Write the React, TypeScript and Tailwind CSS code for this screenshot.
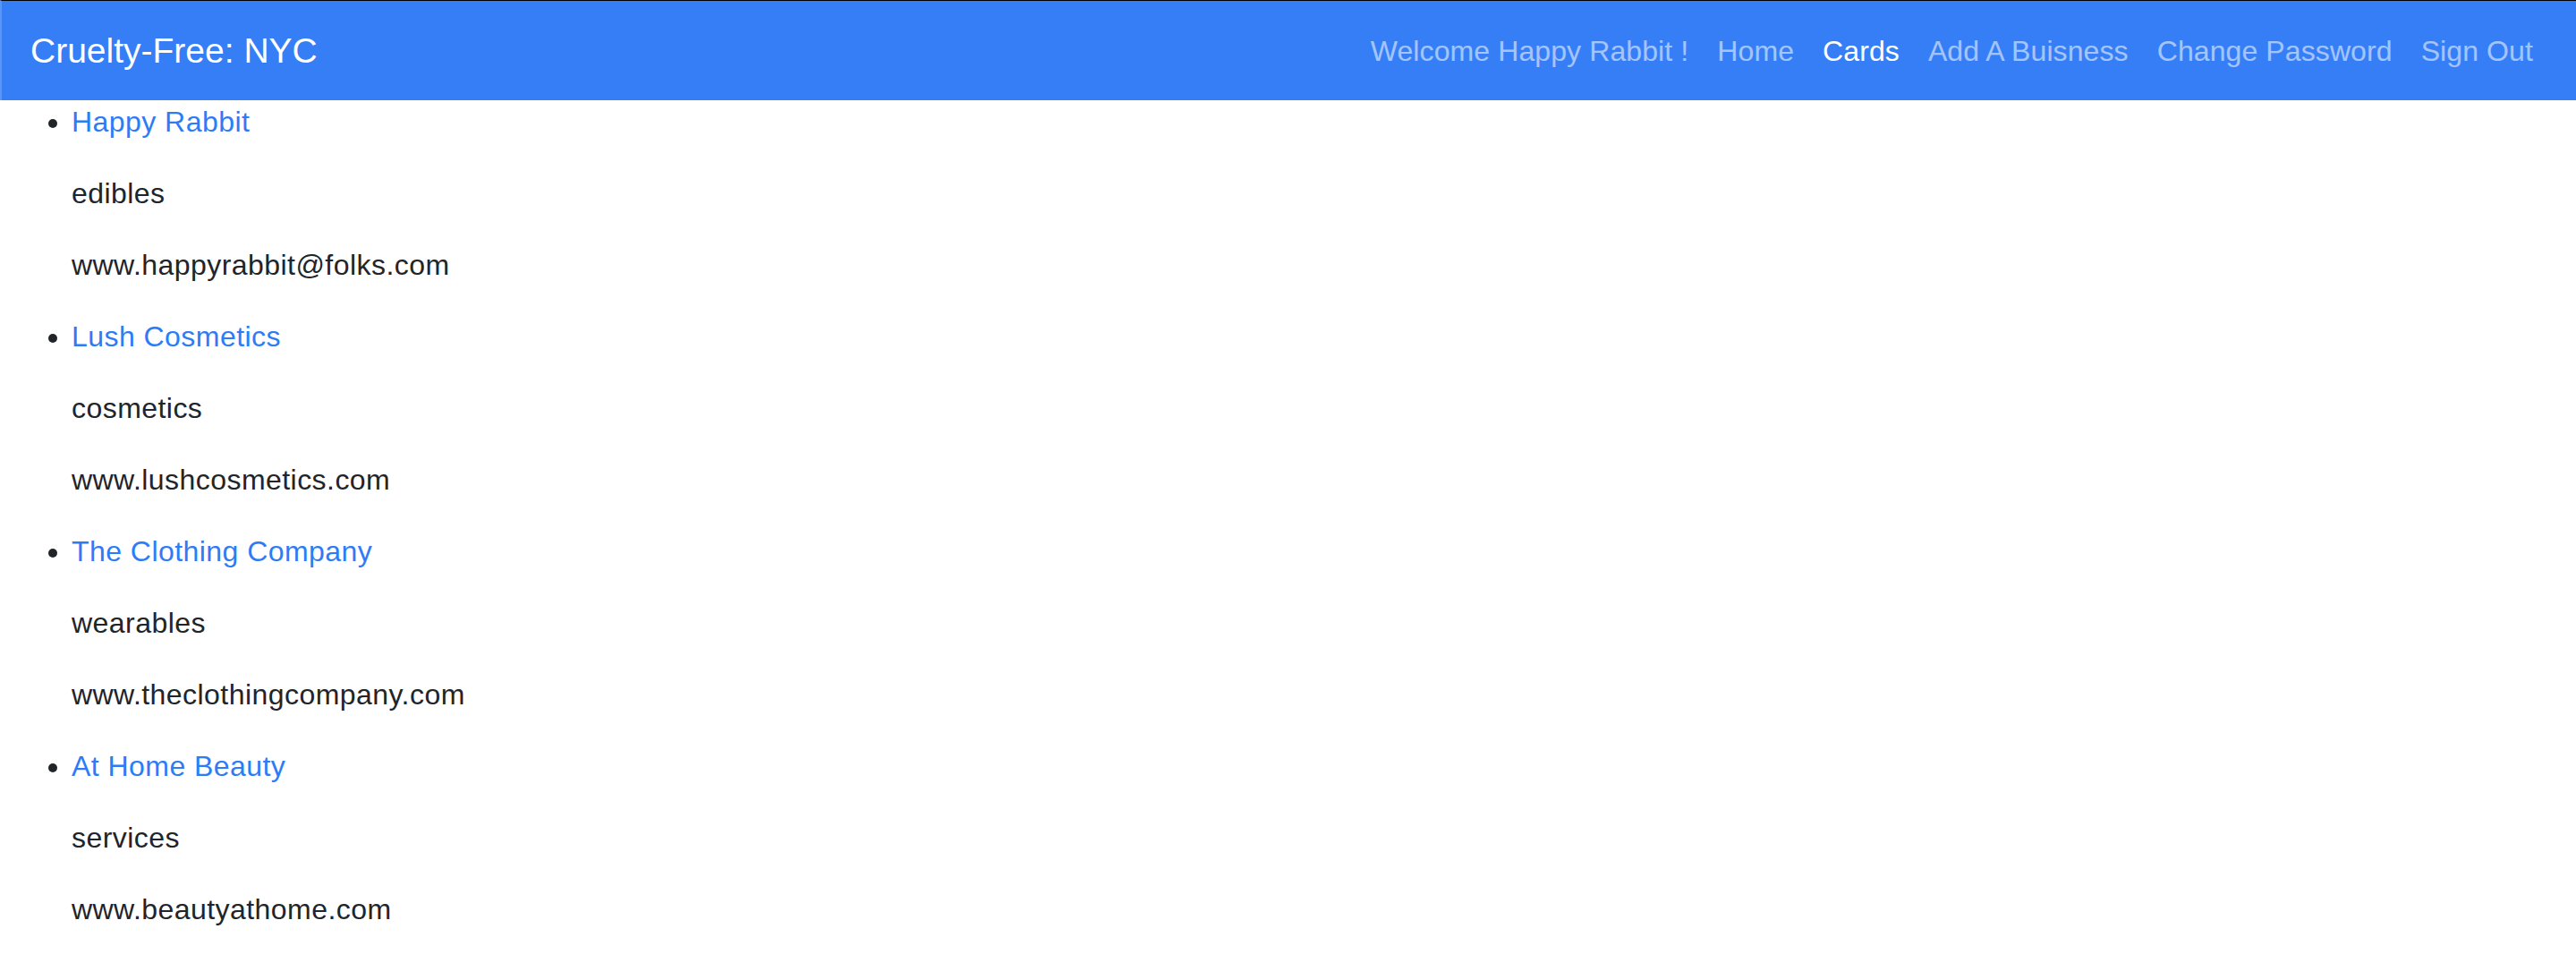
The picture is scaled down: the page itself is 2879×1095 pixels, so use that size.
import React from "react";

const businesses = [
  { name: "Happy Rabbit", category: "edibles", site: "www.happyrabbit@folks.com" },
  { name: "Lush Cosmetics", category: "cosmetics", site: "www.lushcosmetics.com" },
  { name: "The Clothing Company", category: "wearables", site: "www.theclothingcompany.com" },
  { name: "At Home Beauty", category: "services", site: "www.beautyathome.com" },
];

const links = [
  { label: "Welcome Happy Rabbit !", active: false },
  { label: "Home", active: false },
  { label: "Cards", active: true },
  { label: "Add A Buisness", active: false },
  { label: "Change Password", active: false },
  { label: "Sign Out", active: false },
];

const App = () => {
  return (
    <div className="min-h-screen bg-white font-['Liberation_Sans',Arial,sans-serif] text-[#212529]">
      <nav className="flex h-[112px] items-center justify-between border-t border-l-2 border-t-black border-l-[#5a95f5] bg-[#357ef6] px-[32px]">
        <a href="#" className="text-[39px] leading-[60px] text-white">
          Cruelty-Free: NYC
        </a>
        <div className="flex items-center">
          {links.map((l) => (
            <a
              key={l.label}
              href="#"
              className={
                l.active
                  ? "px-[16px] text-[32px] leading-[48px] tracking-[0.1px] text-white"
                  : "px-[16px] text-[32px] leading-[48px] tracking-[0.1px] text-white/55"
              }
            >
              {l.label}
            </a>
          ))}
        </div>
      </nav>

      <ul className="list-disc pl-[80px] text-[32px] leading-[48px] tracking-[0.45px]">
        {businesses.map((b) => (
          <li key={b.name}>
            <p className="mb-[32px]">
              <a href="#" className="text-[#2d7cf6]">
                {b.name}
              </a>
            </p>
            <p className="mb-[32px]">{b.category}</p>
            <p className="mb-[32px]">{b.site}</p>
          </li>
        ))}
      </ul>
    </div>
  );
};

export default App;
